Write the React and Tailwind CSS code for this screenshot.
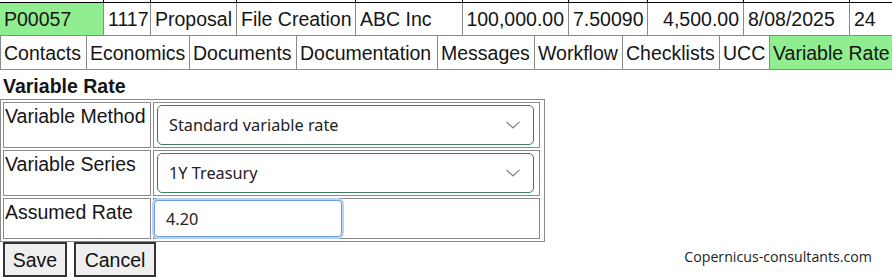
import React from "react";

const topCols = [104, 47, 86, 119, 107, 106, 79, 96, 106];

const row1 = [
  { w: 104, t: "P00057", green: true },
  { w: 47, t: "1117" },
  { w: 86, t: "Proposal" },
  { w: 119, t: "File Creation" },
  { w: 107, t: "ABC Inc" },
  { w: 106, t: "100,000.00", right: true },
  { w: 79, t: "7.50090" },
  { w: 96, t: "4,500.00", right: true },
  { w: 106, t: "8/08/2025" },
];

const tabs = [
  { w: 87, t: "Contacts" },
  { w: 103, t: "Economics" },
  { w: 107, t: "Documents" },
  { w: 141, t: "Documentation" },
  { w: 97, t: "Messages" },
  { w: 88, t: "Workflow" },
  { w: 97, t: "Checklists" },
  { w: 50, t: "UCC" },
];

function Chevron() {
  return (
    <svg width="14" height="8" viewBox="0 0 14 8" className="shrink-0">
      <polyline points="0.5,0.8 7,7 13.5,0.8" fill="none" stroke="#7a7a7a" strokeWidth="1.1" />
    </svg>
  );
}

function FakeSelect({ value }) {
  return (
    <div className="ml-[3px] mt-[2px] flex h-[40px] w-[377px] items-center justify-between rounded-[5px] border border-[#3f7a5e] bg-white pl-[11px] pr-[13px] font-['Noto_Sans',sans-serif] text-[16.3px] text-[#222]">
      <span>{value}</span>
      <Chevron />
    </div>
  );
}

export default function App() {
  return (
    <div className="relative h-[277px] w-[892px] overflow-hidden bg-white font-['Liberation_Sans',Arial,sans-serif] text-[19.5px] leading-[22px] text-[#151515]">
      {/* remnant of previous row */}
      <div className="flex h-[3px] border-b border-black">
        {topCols.map((w, i) => (
          <div key={i} style={{ width: w }} className="shrink-0 border-r border-black" />
        ))}
        <div className="flex-1" />
      </div>

      {/* record row */}
      <div className="flex h-[33px] border-b border-[#8a8a8a]">
        {row1.map((c, i) => (
          <div
            key={i}
            style={{ width: c.w }}
            className={
              "flex shrink-0 items-center border-r border-[#8a8a8a] whitespace-nowrap " +
              (c.green ? "bg-[#90ee90] " : "") +
              (c.right ? "justify-end pr-[4px]" : "pl-[4px]")
            }
          >
            {c.t}
          </div>
        ))}
        <div className="flex flex-1 items-center pl-[4px]">24</div>
      </div>

      {/* tabs */}
      <div className="flex h-[34px] border-b border-l border-[#8a8a8a]">
        {tabs.map((c, i) => (
          <div
            key={i}
            style={{ width: i === 0 ? c.w - 1 : c.w }}
            className="flex shrink-0 items-center whitespace-nowrap border-r border-[#8a8a8a] pl-[3px]"
          >
            {c.t}
          </div>
        ))}
        <div className="flex flex-1 items-center overflow-hidden whitespace-nowrap bg-[#90ee90] pl-[3px]">
          Variable Rate
        </div>
      </div>

      {/* heading */}
      <div className="h-[29px] pl-[3px] pt-[5px] font-bold">Variable Rate</div>

      {/* form table */}
      <div className="grid w-[545px] grid-cols-[148px_387px] grid-rows-[46px_46px_41px] gap-[2px] border border-[#8a8a8a] p-[2px] pr-[4px]">
        <div className="border border-[#8a8a8a] pl-[1px] pt-[2px]">Variable Method</div>
        <div className="border border-[#8a8a8a]">
          <FakeSelect value="Standard variable rate" />
        </div>
        <div className="border border-[#8a8a8a] pl-[1px] pt-[2px]">Variable Series</div>
        <div className="border border-[#8a8a8a]">
          <FakeSelect value="1Y Treasury" />
        </div>
        <div className="border border-[#8a8a8a] pl-[1px] pt-[2px]">Assumed Rate</div>
        <div className="border border-[#8a8a8a]">
          <div className="mt-[1px] flex h-[37px] w-[188px] items-center rounded-[4px] border border-[#6c9de0] bg-white pl-[11px] font-['Noto_Sans',sans-serif] text-[16.3px] text-[#222] shadow-[0_0_0_2px_#b9d3f6]">
            4.20
          </div>
        </div>
      </div>

      {/* buttons */}
      <div className="flex items-start">
        <button className="ml-[3px] h-[35px] w-[64px] border-2 border-[#333] bg-[#efefef] text-[19.5px] text-[#111]">
          Save
        </button>
        <button className="ml-[7px] h-[35px] w-[82px] border-2 border-[#333] bg-[#efefef] text-[19.5px] text-[#111]">
          Cancel
        </button>
        <div className="ml-auto mr-[20px] mt-[6px] font-['Open_Sans',sans-serif] text-[14.2px] leading-[18px] text-[#1e1e1e]">
          Copernicus-consultants.com
        </div>
      </div>
    </div>
  );
}
